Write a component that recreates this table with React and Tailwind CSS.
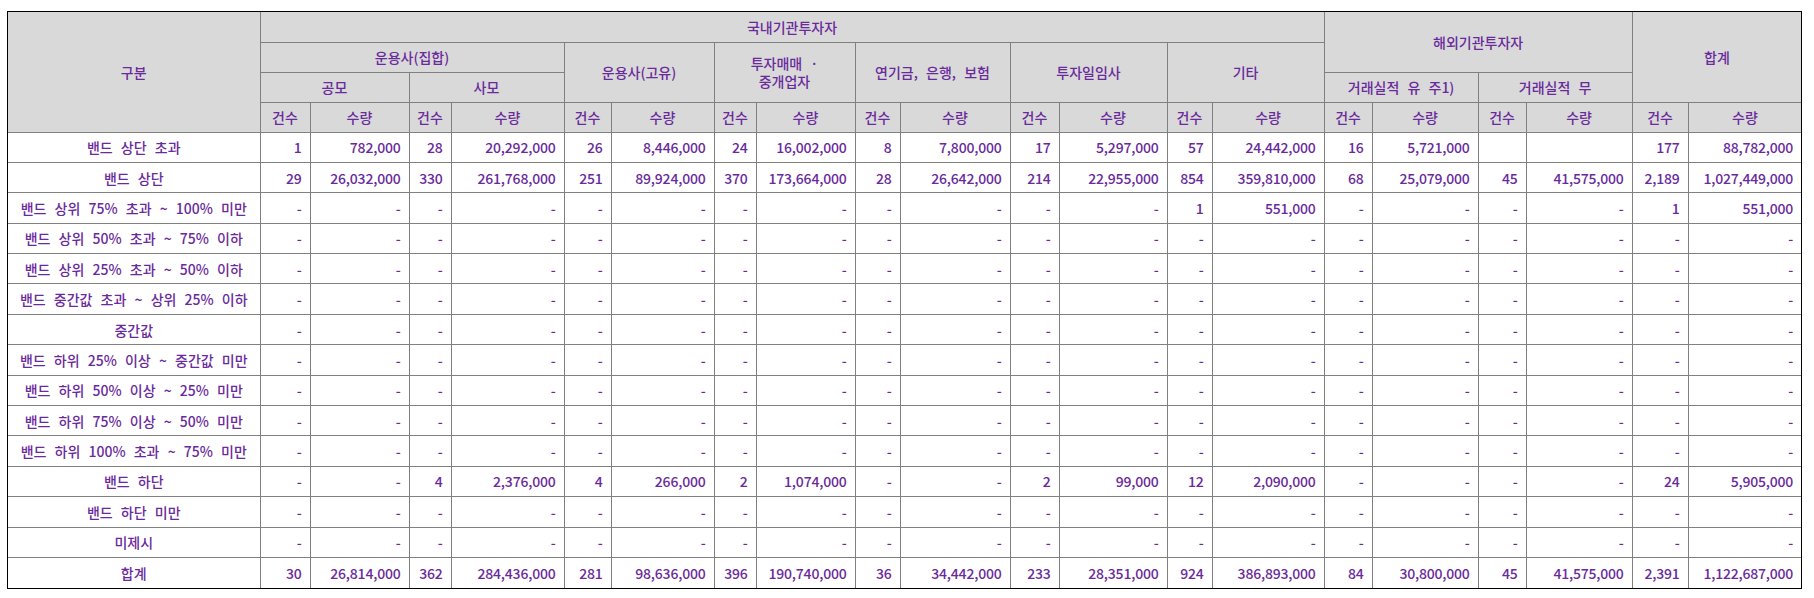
const colWidths = [
  'w-[252px]', 'w-[50px]', 'w-[99px]', 'w-[42px]', 'w-[113px]', 'w-[47px]', 'w-[103px]',
  'w-[42px]', 'w-[99px]', 'w-[45px]', 'w-[110px]', 'w-[49px]', 'w-[108px]', 'w-[45px]',
  'w-[112px]', 'w-[48px]', 'w-[106px]', 'w-[48px]', 'w-[106px]', 'w-[56px]', 'w-[113px]',
]

const D = '-'
const dashes = Array(20).fill(D)

const rows = [
  ['밴드 상단 초과', ['1', '782,000', '28', '20,292,000', '26', '8,446,000', '24', '16,002,000', '8', '7,800,000', '17', '5,297,000', '57', '24,442,000', '16', '5,721,000', '', '', '177', '88,782,000']],
  ['밴드 상단', ['29', '26,032,000', '330', '261,768,000', '251', '89,924,000', '370', '173,664,000', '28', '26,642,000', '214', '22,955,000', '854', '359,810,000', '68', '25,079,000', '45', '41,575,000', '2,189', '1,027,449,000']],
  ['밴드 상위 75% 초과 ~ 100% 미만', [D, D, D, D, D, D, D, D, D, D, D, D, '1', '551,000', D, D, D, D, '1', '551,000']],
  ['밴드 상위 50% 초과 ~ 75% 이하', dashes],
  ['밴드 상위 25% 초과 ~ 50% 이하', dashes],
  ['밴드 중간값 초과 ~ 상위 25% 이하', dashes],
  ['중간값', dashes],
  ['밴드 하위 25% 이상 ~ 중간값 미만', dashes],
  ['밴드 하위 50% 이상 ~ 25% 미만', dashes],
  ['밴드 하위 75% 이상 ~ 50% 미만', dashes],
  ['밴드 하위 100% 초과 ~ 75% 미만', dashes],
  ['밴드 하단', [D, D, '4', '2,376,000', '4', '266,000', '2', '1,074,000', D, D, '2', '99,000', '12', '2,090,000', D, D, D, D, '24', '5,905,000']],
  ['밴드 하단 미만', dashes],
  ['미제시', dashes],
  ['합계', ['30', '26,814,000', '362', '284,436,000', '281', '98,636,000', '396', '190,740,000', '36', '34,442,000', '233', '28,351,000', '924', '386,893,000', '84', '30,800,000', '45', '41,575,000', '2,391', '1,122,687,000']],
]

const th = 'border border-[#808080] bg-[#d9d9d9] font-medium text-center align-middle px-1 [word-spacing:5px]'
const td = 'border border-[#808080] text-right pr-2 align-middle whitespace-nowrap tracking-[-0.2px]'

export default function App() {
  return (
    <div className="bg-white min-h-[598px] pt-[11px] pl-[7px]" style={{ fontFamily: '"Noto Sans CJK KR", "Noto Sans", sans-serif' }}>
      <div className="w-[1795px] border border-black">
        <table className="w-full h-[576px] table-fixed border-collapse border-hidden text-[14px] leading-[18px] font-medium text-[#6a2a9c]">
          <colgroup>
            {colWidths.map((w, i) => <col key={i} className={w} />)}
          </colgroup>
          <thead>
            <tr className="h-[30px]">
              <th rowSpan={4} className={th}>구분</th>
              <th colSpan={14} className={th}>국내기관투자자</th>
              <th colSpan={4} rowSpan={2} className={th}>해외기관투자자</th>
              <th colSpan={2} rowSpan={3} className={th}>합계</th>
            </tr>
            <tr className="h-[30px]">
              <th colSpan={4} className={th}>운용사(집합)</th>
              <th colSpan={2} rowSpan={2} className={th}>운용사(고유)</th>
              <th colSpan={2} rowSpan={2} className={th}>투자매매 ·<br />중개업자</th>
              <th colSpan={2} rowSpan={2} className={th}>연기금, 은행, 보험</th>
              <th colSpan={2} rowSpan={2} className={th}>투자일임사</th>
              <th colSpan={2} rowSpan={2} className={th}>기타</th>
            </tr>
            <tr className="h-[30px]">
              <th colSpan={2} className={th}>공모</th>
              <th colSpan={2} className={th}>사모</th>
              <th colSpan={2} className={th}>거래실적 유 주1)</th>
              <th colSpan={2} className={th}>거래실적 무</th>
            </tr>
            <tr className="h-[30px]">
              {Array.from({ length: 10 }).flatMap((_, i) => [
                <th key={`a${i}`} className={th}>건수</th>,
                <th key={`b${i}`} className={th}>수량</th>,
              ])}
            </tr>
          </thead>
          <tbody>
            {rows.map(([label, vals]) => (
              <tr key={label} className="h-[30px]">
                <td className="border border-[#808080] text-center align-middle whitespace-nowrap [word-spacing:5px]">{label}</td>
                {vals.map((v, i) => (
                  <td key={i} className={td}>{v}</td>
                ))}
              </tr>
            ))}
          </tbody>
        </table>
      </div>
    </div>
  )
}
